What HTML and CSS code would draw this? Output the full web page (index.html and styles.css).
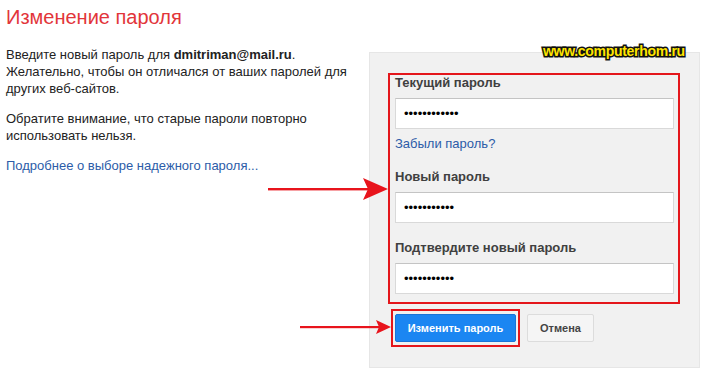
FILE: index.html
```html
<!DOCTYPE html>
<html lang="ru">

<head>
  <meta charset="UTF-8">
  <meta name="viewport" content="width=device-width, initial-scale=1.0">

  <link rel="stylesheet" href="styles.css">
</head>

<body>

  <div class="page">
    <div class="intro">
      <h1>Изменение пароля</h1>
      <p>Введите новый пароль для <b>dmitriman@mail.ru</b>. Желательно, чтобы он отличался от ваших паролей для других веб-сайтов.</p>
      <p>Обратите внимание, что старые пароли повторно использовать нельзя.</p>
      <a href="#" class="link">Подробнее о выборе надежного пароля...</a>
    </div>

    <div class="panel">
      <div class="mark-box">
        <label>Текущий пароль</label>
        <input type="password" value="xxxxxxxxxxxx">
        <a href="#" class="link forgot">Забыли пароль?</a>

        <label class="gap">Новый пароль</label>
        <input type="password" value="xxxxxxxxxxx">

        <label class="gap">Подтвердите новый пароль</label>
        <input type="password" value="xxxxxxxxxxx">
      </div>

      <div class="actions">
        <div class="mark-btn">
          <button class="btn-primary">Изменить пароль</button>
        </div>
        <button class="btn-cancel">Отмена</button>
      </div>
    </div>
  </div>

  <div class="watermark">www.computerhom.ru</div>

  <svg class="arrow arrow-one" width="122" height="24" viewBox="0 0 122 24">
    <rect x="0" y="10" width="104" height="2.4" fill="#e8141c"/>
    <path d="M95 0 L120 11 L95 22 L100 11 Z" fill="#e8141c"/>
  </svg>

  <svg class="arrow arrow-two" width="92" height="16" viewBox="0 0 92 16">
    <rect x="0" y="7" width="80" height="2.2" fill="#e8141c"/>
    <path d="M76 1 L91 8 L76 15 L79 8 Z" fill="#e8141c"/>
  </svg>

</body>

</html>
```

FILE: styles.css
```css
* {
  margin: 0;
  padding: 0;
  box-sizing: border-box;
  font-family: "Liberation Sans", Arial, sans-serif;
}

body {
  background: #fff;
  color: #222;
  font-size: 13px;
}

.page {
  display: flex;
  align-items: flex-start;
}

.intro {
  width: 369px;
  flex-shrink: 0;
  padding: 5px 19px 0 6px;
}

.intro h1 {
  color: #e2353a;
  font-size: 20px;
  font-weight: 400;
  line-height: 24px;
  margin-bottom: 17px;
}

.intro p {
  line-height: 17px;
  margin-bottom: 13px;
}

.intro b {
  color: #222;
}

.link {
  color: #2c5ca8;
  text-decoration: none;
  line-height: 17px;
}

.panel {
  margin-top: 52px;
  width: 331px;
  flex-shrink: 0;
  background: #f1f1f1;
  border: 1px solid #e6e6e6;
  padding: 20px 19px 20px 18px;
}

.mark-box {
  display: flex;
  flex-direction: column;
  align-items: flex-start;
  border: 2px solid #e4161b;
  padding: 0 4px 8px 5px;
}

.mark-box label {
  font-weight: 700;
  color: #404040;
  line-height: 16px;
  margin-bottom: 7px;
}

.mark-box label.gap {
  margin-top: 17px;
}

.mark-box input {
  width: 100%;
  height: 31px;
  background: #fff;
  border: 1px solid #d9d9d9;
  border-top-color: #c4c4c4;
  padding: 0 8px;
  font-size: 13px;
  color: #000;
}

.forgot {
  margin-top: 7px;
  line-height: 16px;
}

.actions {
  display: flex;
  align-items: center;
  margin-top: 5px;
  margin-left: 3px;
}

.mark-btn {
  border: 2px solid #e4161b;
  padding: 3px 2px;
}

button {
  height: 28px;
  font-size: 11px;
  font-weight: 700;
  border-radius: 2px;
  cursor: pointer;
}

.btn-primary {
  width: 121px;
  display: block;
  background: #1b86f2;
  border: 1px solid #1a74d6;
  color: #fff;
}

.btn-cancel {
  width: 67px;
  margin-left: 7px;
  background: #f5f5f5;
  border: 1px solid #dcdcdc;
  color: #444;
}

.watermark {
  position: absolute;
  top: 43px;
  left: 543px;
  font-size: 14px;
  font-weight: 700;
  color: #ffe600;
  -webkit-text-stroke: 3px #111;
  paint-order: stroke fill;
  letter-spacing: -0.3px;
}

.arrow {
  position: absolute;
}

.arrow-one {
  left: 268px;
  top: 178px;
}

.arrow-two {
  left: 300px;
  top: 319px;
}
```
